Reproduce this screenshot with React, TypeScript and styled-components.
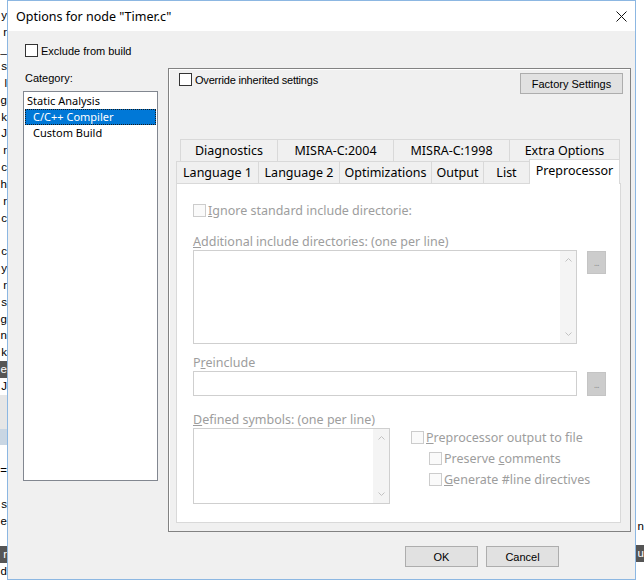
import React from 'react';
import styled, { createGlobalStyle } from 'styled-components';

const GlobalStyle = createGlobalStyle`
  html, body {
    margin: 0;
    padding: 0;
    background: #fff;
  }
`;

const Desktop = styled.div`
  position: relative;
  width: 644px;
  height: 587px;
  overflow: hidden;
  background: #fff;
  font-family: "Liberation Sans", Arial, sans-serif;
`;

const BehindColumn = styled.div`
  display: flex;
  flex-direction: column;
  width: 7px;
  margin-top: -9.4px;
`;

const Fragment = styled.div<{ $tone?: 'dark' | 'gray' | 'blue' }>`
  height: 16.85px;
  line-height: 16.85px;
  font-size: 11.5px;
  text-align: right;
  color: ${p => (p.$tone === 'dark' ? '#fff' : '#000')};
  background: ${p =>
    p.$tone === 'dark' ? '#555' : p.$tone === 'gray' ? '#e6e6e6' : p.$tone === 'blue' ? '#c9d6e3' : 'transparent'};
`;

const RightBehind = styled.div`
  position: absolute;
  right: 0;
  top: 518px;
  width: 8px;
  display: flex;
  flex-direction: column;
  gap: 10px;
`;

const Dialog = styled.div`
  position: absolute;
  left: 7px;
  top: 0;
  width: 629px;
  height: 580px;
  box-sizing: border-box;
  border: 1px solid #8cb7e2;
  background: #f0f0f0;
  display: flex;
  flex-direction: column;
`;

const TitleBar = styled.div`
  height: 30px;
  background: #fff;
  display: flex;
  align-items: center;
  justify-content: space-between;
  padding-left: 8px;
`;

const Title = styled.span`
  font-family: "Noto Sans", sans-serif;
  font-size: 12.5px;
  color: #000;
`;

const CloseButton = styled.div`
  width: 28px;
  height: 30px;
  display: flex;
  align-items: center;
  justify-content: center;
`;

const Body = styled.div`
  display: flex;
  flex-direction: column;
  padding: 13px 3px 0 15px;
`;

const CheckRow = styled.label<{ $indent?: number }>`
  display: flex;
  align-items: center;
  gap: 3px;
  height: 13px;
  margin-left: ${p => p.$indent ?? 0}px;
  font-size: 11px;
  color: #000;
`;

const Box = styled.span<{ $disabled?: boolean }>`
  width: 13px;
  height: 13px;
  box-sizing: border-box;
  border: 1px solid ${p => (p.$disabled ? '#cccccc' : '#333')};
  background: ${p => (p.$disabled ? '#fafafa' : '#fff')};
  flex-shrink: 0;
`;

const Main = styled.div`
  display: flex;
  gap: 10px;
  margin-top: 11px;
`;

const LeftColumn = styled.div`
  width: 135px;
  display: flex;
  flex-direction: column;
`;

const SmallLabel = styled.div`
  margin: 3px 0 6px 2px;
  line-height: 14px;
  font-size: 11px;
  color: #000;
`;

const ListBox = styled.div`
  height: 390px;
  box-sizing: border-box;
  border: 1px solid #828790;
  background: #fff;
  padding: 1px;
`;

const ListItem = styled.div<{ $indent: number; $selected?: boolean }>`
  height: 16px;
  line-height: 14px;
  box-sizing: border-box;
  padding-left: ${p => p.$indent}px;
  font-family: "Noto Sans", sans-serif;
  font-size: 11px;
  color: ${p => (p.$selected ? '#fff' : '#000')};
  background: ${p => (p.$selected ? '#0078d7' : 'transparent')};
  border: 1px ${p => (p.$selected ? 'dotted #1a1a1a' : 'solid transparent')};
`;

const Panel = styled.div`
  width: 463px;
  height: 464px;
  box-sizing: border-box;
  border: 1px solid #828282;
  box-shadow: inset 1px 1px 0 #fff;
  display: flex;
  flex-direction: column;
  padding: 4px 7px 0 7px;
`;

const PanelTop = styled.div`
  display: flex;
  justify-content: space-between;
  align-items: flex-start;
  height: 21px;
  padding-left: 3px;
`;

const OverrideText = styled.span`
  letter-spacing: -0.2px;
`;

const Button = styled.div<{ $w: number }>`
  width: ${p => p.$w}px;
  height: 21px;
  box-sizing: border-box;
  border: 1px solid #adadad;
  background: #e1e1e1;
  display: flex;
  align-items: center;
  justify-content: center;
  font-size: 11px;
  color: #000;
`;

const Tabs = styled.div`
  margin-top: 45px;
  width: 445px;
  display: flex;
  flex-direction: column;
`;

const TabRow = styled.div<{ $offset: number }>`
  display: flex;
  height: 22px;
  padding-left: ${p => p.$offset}px;
  align-items: flex-end;
`;

const Tab = styled.div<{ $w: number; $active?: boolean }>`
  width: ${p => p.$w}px;
  height: ${p => (p.$active ? 25 : 22)}px;
  margin-bottom: ${p => (p.$active ? -1 : 0)}px;
  box-sizing: border-box;
  border: 1px solid #d9d9d9;
  border-bottom: none;
  margin-left: -1px;
  background: ${p => (p.$active ? '#fff' : '#f0f0f0')};
  position: relative;
  z-index: ${p => (p.$active ? 1 : 0)};
  display: flex;
  align-items: center;
  justify-content: center;
  padding-bottom: ${p => (p.$active ? 3 : 0)}px;
  font-family: "Noto Sans", sans-serif;
  font-size: 12.5px;
  color: #000;

  &:first-child {
    margin-left: 0;
  }
`;

const Page = styled.div`
  height: 340px;
  box-sizing: border-box;
  border: 1px solid #d9d9d9;
  background: #fff;
  padding: 20px 0 0 16px;
  display: flex;
  flex-direction: column;
  font-family: "Noto Sans", sans-serif;
  font-size: 12.5px;
  color: #9d9d9d;
`;

const DimCheck = styled.div<{ $indent?: number }>`
  display: flex;
  align-items: center;
  gap: 2px;
  height: 13px;
  margin-left: ${p => p.$indent ?? 0}px;
  white-space: nowrap;
`;

const FieldLabel = styled.div<{ $gap: number }>`
  margin-top: ${p => p.$gap}px;
  padding-top: 2px;
  line-height: 14px;
  white-space: nowrap;
`;

const U = styled.span`
  text-decoration: underline;
`;

const FieldRow = styled.div`
  display: flex;
  gap: 10px;
  margin-top: 1px;
  align-items: flex-start;
`;

const TextBox = styled.div<{ $w: number; $h: number }>`
  width: ${p => p.$w}px;
  height: ${p => p.$h}px;
  box-sizing: border-box;
  border: 1px solid #cfcfcf;
  background: #fff;
  display: flex;
  justify-content: flex-end;
`;

const ScrollTrack = styled.div`
  width: 16px;
  background: #f4f4f4;
  display: flex;
  flex-direction: column;
  justify-content: space-between;
  align-items: center;
  padding: 7px 0;
`;

const Browse = styled.div<{ $h: number }>`
  width: 19px;
  height: ${p => p.$h}px;
  margin-top: 1px;
  box-sizing: border-box;
  border: 1px solid #c4c4c4;
  background: #cccccc;
  display: flex;
  align-items: center;
  justify-content: center;
  font-size: 8px;
  color: #8a8a8a;
  letter-spacing: -0.5px;
`;

const Options = styled.div`
  display: flex;
  flex-direction: column;
  gap: 8px;
  margin-left: 11px;
  padding-top: 3px;
`;

const Footer = styled.div`
  display: flex;
  justify-content: flex-end;
  gap: 8px;
  margin: 14px 73px 0 0;
`;

const Chevron = ({ up }: { up?: boolean }) => (
  <svg width="7" height="4" viewBox="0 0 7 4">
    <path d={up ? 'M0.5 3.5 L3.5 0.5 L6.5 3.5' : 'M0.5 0.5 L3.5 3.5 L6.5 0.5'} fill="none" stroke="#c2c2c2" strokeWidth="1" />
  </svg>
);

const Scroll = () => (
  <ScrollTrack>
    <Chevron up />
    <Chevron />
  </ScrollTrack>
);

const leftFragments: { t: string; tone?: 'dark' | 'gray' | 'blue' }[] = [
  { t: '' }, { t: 'y' }, { t: 'r' }, { t: '_' }, { t: 's' }, { t: 'l' }, { t: 'g' },
  { t: 'k' }, { t: 'J' }, { t: 'r' }, { t: 'c' }, { t: 'h' }, { t: 'r' }, { t: 'c' },
  { t: '' }, { t: 'c' }, { t: 'y' }, { t: 'r' }, { t: 's' }, { t: 'g' }, { t: 'n' },
  { t: 'k' }, { t: 'e', tone: 'dark' }, { t: 'J' }, { t: '', tone: 'gray' },
  { t: '', tone: 'gray' }, { t: '', tone: 'blue' }, { t: '' }, { t: '=' }, { t: '' },
  { t: 's' }, { t: 'e' }, { t: '' }, { t: 'r', tone: 'dark' }, { t: 'd' },
];

const topTabs = [
  { label: 'Diagnostics', w: 98 },
  { label: 'MISRA-C:2004', w: 117 },
  { label: 'MISRA-C:1998', w: 117 },
  { label: 'Extra Options', w: 111 },
];

const bottomTabs = [
  { label: 'Language 1', w: 83 },
  { label: 'Language 2', w: 82 },
  { label: 'Optimizations', w: 93 },
  { label: 'Output', w: 53 },
  { label: 'List', w: 47 },
];

export default function App() {
  return (
    <>
      <GlobalStyle />
      <Desktop>
        <BehindColumn>
          {leftFragments.map((f, i) => (
            <Fragment key={i} $tone={f.tone}>{f.t}</Fragment>
          ))}
        </BehindColumn>
        <RightBehind>
          <Fragment>n</Fragment>
          <Fragment $tone="dark">u</Fragment>
        </RightBehind>

        <Dialog>
          <TitleBar>
            <Title>Options for node "Timer.c"</Title>
            <CloseButton>
              <svg width="11" height="11" viewBox="0 0 11 11">
                <path d="M0.5 0.5 L10.5 10.5 M10.5 0.5 L0.5 10.5" stroke="#111" strokeWidth="1" />
              </svg>
            </CloseButton>
          </TitleBar>

          <Body>
            <CheckRow $indent={2}>
              <Box />
              Exclude from build
            </CheckRow>

            <Main>
              <LeftColumn>
                <SmallLabel>Category:</SmallLabel>
                <ListBox>
                  <ListItem $indent={1}>Static Analysis</ListItem>
                  <ListItem $indent={7} $selected>C/C++ Compiler</ListItem>
                  <ListItem $indent={7}>Custom Build</ListItem>
                </ListBox>
              </LeftColumn>

              <Panel>
                <PanelTop>
                  <CheckRow>
                    <Box />
                    <OverrideText>Override inherited settings</OverrideText>
                  </CheckRow>
                  <Button $w={103}>Factory Settings</Button>
                </PanelTop>

                <Tabs>
                  <TabRow $offset={4}>
                    {topTabs.map(t => (
                      <Tab key={t.label} $w={t.w}>{t.label}</Tab>
                    ))}
                  </TabRow>
                  <TabRow $offset={0}>
                    {bottomTabs.map(t => (
                      <Tab key={t.label} $w={t.w}>{t.label}</Tab>
                    ))}
                    <Tab $w={91} $active>Preprocessor</Tab>
                  </TabRow>
                  <Page>
                    <DimCheck>
                      <Box $disabled />
                      <span><U>I</U>gnore standard include directorie:</span>
                    </DimCheck>

                    <FieldLabel $gap={16}>
                      <U>A</U>dditional include directories: (one per line)
                    </FieldLabel>
                    <FieldRow>
                      <TextBox $w={384} $h={94}>
                        <Scroll />
                      </TextBox>
                      <Browse $h={23}>...</Browse>
                    </FieldRow>

                    <FieldLabel $gap={10}>
                      P<U>r</U>einclude
                    </FieldLabel>
                    <FieldRow>
                      <TextBox $w={384} $h={25} />
                      <Browse $h={24}>...</Browse>
                    </FieldRow>

                    <FieldLabel $gap={15}>
                      <U>D</U>efined symbols: (one per line)
                    </FieldLabel>
                    <FieldRow>
                      <TextBox $w={197} $h={76}>
                        <Scroll />
                      </TextBox>
                      <Options>
                        <DimCheck>
                          <Box $disabled />
                          <span><U>P</U>reprocessor output to file</span>
                        </DimCheck>
                        <DimCheck $indent={18}>
                          <Box $disabled />
                          <span>Preserve <U>c</U>omments</span>
                        </DimCheck>
                        <DimCheck $indent={18}>
                          <Box $disabled />
                          <span><U>G</U>enerate #line directives</span>
                        </DimCheck>
                      </Options>
                    </FieldRow>
                  </Page>
                </Tabs>
              </Panel>
            </Main>

            <Footer>
              <Button $w={73}>OK</Button>
              <Button $w={73}>Cancel</Button>
            </Footer>
          </Body>
        </Dialog>
      </Desktop>
    </>
  );
}
